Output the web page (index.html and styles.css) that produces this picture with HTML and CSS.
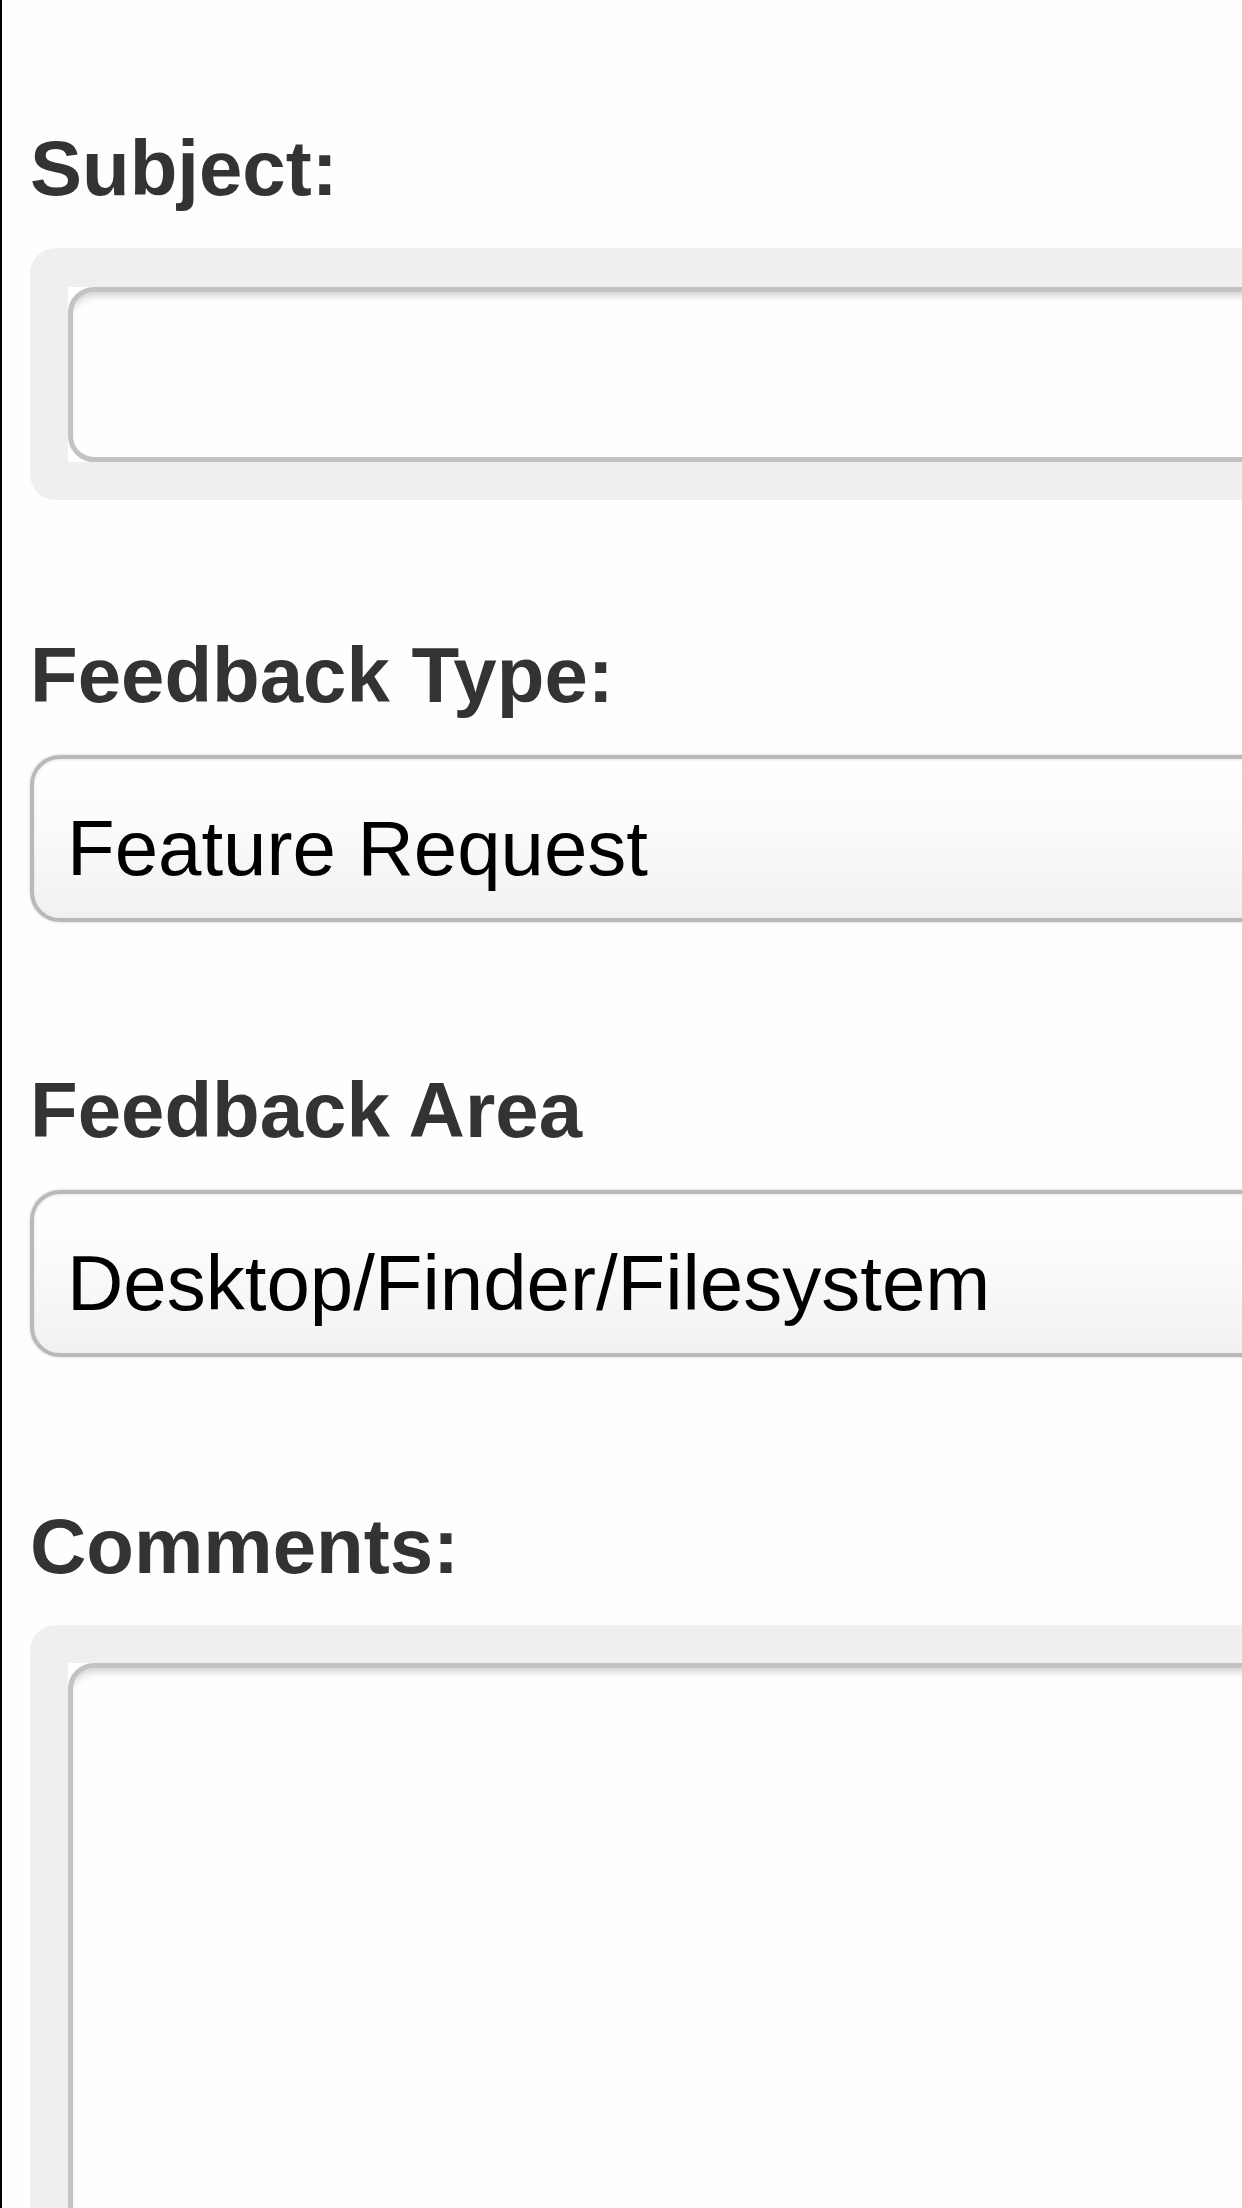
FILE: index.html
```html
<!DOCTYPE html>
<html lang="en">
<head>
<meta charset="utf-8">
<title>Feedback</title>
<link rel="stylesheet" href="styles.css">
</head>
<body>
<form class="page">
  <div class="field field-subject">
    <label class="label" for="subject">Subject:</label>
    <div class="well">
      <div class="input-bg"><input class="input" id="subject" type="text"></div>
    </div>
  </div>

  <div class="field field-type">
    <label class="label">Feedback Type:</label>
    <div class="select">Feature Request</div>
  </div>

  <div class="field field-area">
    <label class="label">Feedback Area</label>
    <div class="select">Desktop/Finder/Filesystem</div>
  </div>

  <div class="field field-comments">
    <label class="label" for="comments">Comments:</label>
    <div class="well">
      <div class="input-bg"><textarea class="input textarea" id="comments"></textarea></div>
    </div>
  </div>
</form>
</body>
</html>
```

FILE: styles.css
```css
html, body {
  margin: 0;
  padding: 0;
  overflow: hidden;
  background: #fefefe;
}

body {
  border-left: 2px solid #000;
  height: 2208px;
  box-sizing: border-box;
  font-family: "Liberation Sans", Arial, Helvetica, sans-serif;
}

.page {
  display: flex;
  flex-direction: column;
  box-sizing: border-box;
  height: 2208px;
  padding: 123px 0 0 28px;
  overflow: hidden;
}

.field {
  display: flex;
  flex-direction: column;
  margin-right: -80px;
}

.field-type { margin-top: 130px; }
.field-area { margin-top: 143px; }
.field-comments { margin-top: 144px; }

.label {
  display: block;
  font-size: 78px;
  line-height: 90px;
  font-weight: bold;
  color: #333333;
  margin: 0 0 35px 0;
}

.field-comments .label { margin-bottom: 34px; }

.well {
  background: #efefef;
  border-radius: 26px;
  padding: 39px 0 38px 38px;
}

.field-comments .well {
  padding-top: 38px;
}

.input-bg {
  background: #ffffff;
}

.input {
  display: block;
  box-sizing: border-box;
  width: 100%;
  height: 175px;
  margin: 0;
  border: 5px solid #c3c3c3;
  border-radius: 26px;
  background: #fefefe;
  box-shadow: inset 0 8px 9px -5px rgba(0, 0, 0, 0.2);
  font: 78px "Liberation Sans", Arial, sans-serif;
  outline: none;
  -webkit-appearance: none;
  appearance: none;
}

.textarea {
  height: 700px;
  resize: none;
}

.select {
  box-sizing: border-box;
  height: 167px;
  border: 4px solid #b9b9b9;
  border-radius: 30px;
  background: linear-gradient(#ffffff 0%, #fbfbfb 40%, #f1f1f1 100%);
  box-shadow: 0 0 3px rgba(0, 0, 0, 0.2), inset 0 1px 3px rgba(0, 0, 0, 0.1);
  padding: 44px 0 25px 33px;
  font-size: 78px;
  line-height: 90px;
  color: #000;
  white-space: nowrap;
}
```
